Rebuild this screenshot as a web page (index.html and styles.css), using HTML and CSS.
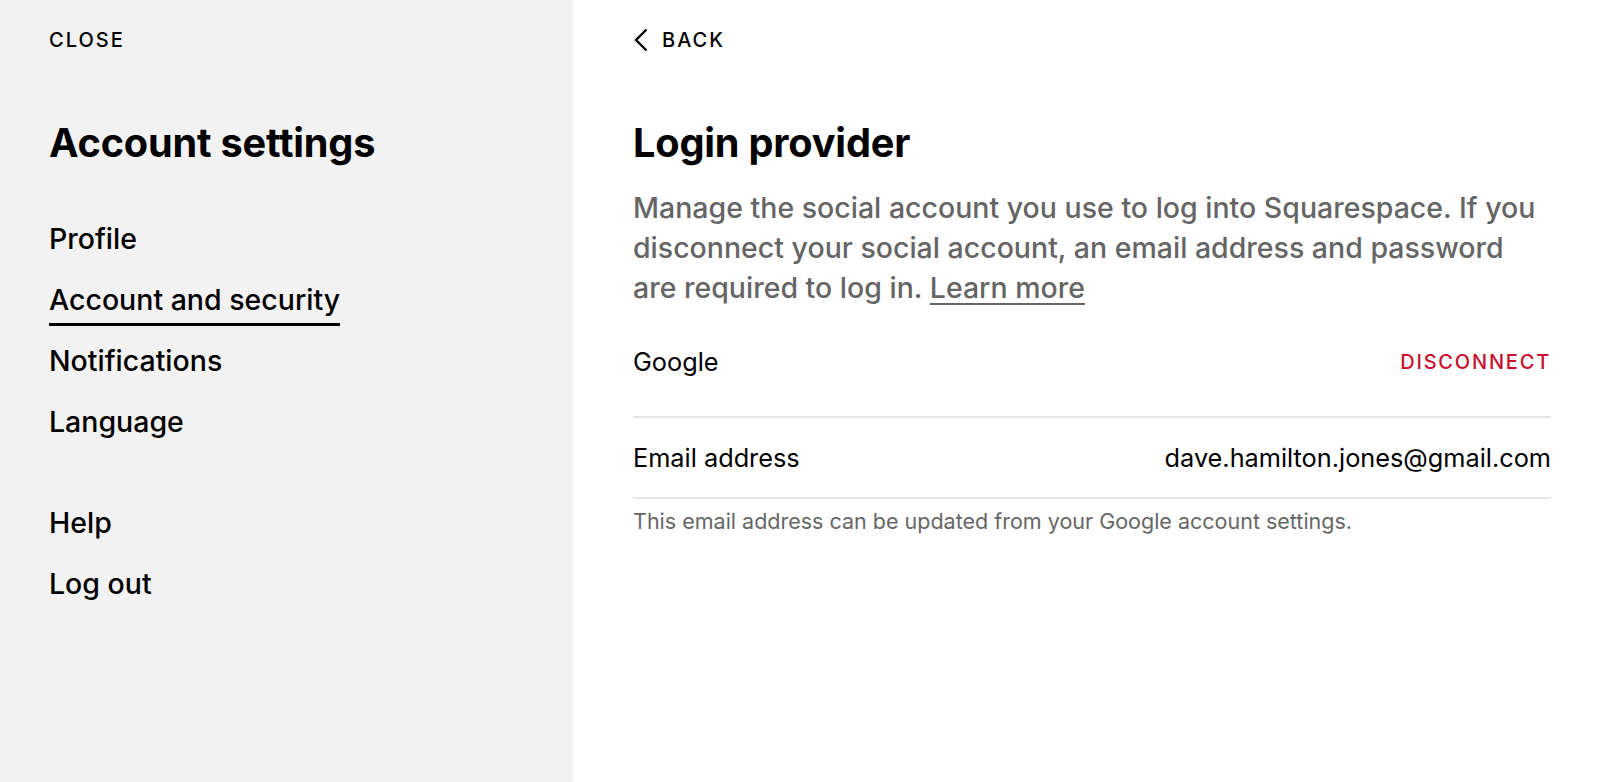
FILE: index.html
```html
<!DOCTYPE html>
<html lang="en">
<head>
<meta charset="utf-8">
<title>Account settings – Login provider</title>
<link rel="stylesheet" href="styles.css">
</head>
<body>
<div class="app">
  <aside class="sidebar">
    <a class="caps-link close" href="#">CLOSE</a>
    <h1 class="title">Account settings</h1>
    <nav class="nav">
      <a class="nav-item" href="#">Profile</a>
      <a class="nav-item active" href="#">Account and security</a>
      <a class="nav-item" href="#">Notifications</a>
      <a class="nav-item" href="#">Language</a>
      <a class="nav-item spaced" href="#">Help</a>
      <a class="nav-item" href="#">Log out</a>
    </nav>
  </aside>
  <main class="main">
    <a class="caps-link back" href="#">
      <svg class="chev" width="16" height="24" viewBox="0 0 16 24" aria-hidden="true"><path d="M13.5 1.5 L3 12 L13.5 22.5" fill="none" stroke="#000" stroke-width="2.4" stroke-linejoin="miter"/></svg>
      <span>BACK</span>
    </a>
    <h1 class="title">Login provider</h1>
    <p class="desc">Manage the social account you use to log into Squarespace. If you disconnect your social account, an email address and password are required to log in. <a class="learn" href="#">Learn more</a></p>
    <div class="row provider">
      <span class="row-label">Google</span>
      <a class="disconnect" href="#">DISCONNECT</a>
    </div>
    <div class="row email">
      <span class="row-label">Email address</span>
      <span class="row-value">dave.hamilton.jones@gmail.com</span>
    </div>
    <p class="note">This email address can be updated from your Google account settings.</p>
  </main>
</div>
</body>
</html>
```

FILE: styles.css
```css
* { box-sizing: border-box; }
html, body { margin: 0; padding: 0; }
body {
  font-family: "Inter", "Liberation Sans", Arial, sans-serif;
  color: #000;
  background: #fff;
}
a { color: inherit; text-decoration: none; }

.app {
  display: flex;
  height: 782px;
}

.sidebar {
  width: 573px;
  flex: none;
  background: #f2f2f2;
  padding: 28px 48px 0 49px;
  display: flex;
  flex-direction: column;
  align-items: flex-start;
}

.caps-link {
  font-size: 20px;
  font-weight: 500;
  letter-spacing: 2px;
  line-height: 24px;
  height: 24px;
}

.title {
  margin: 67px 0 0;
  font-size: 39.7px;
  font-weight: 700;
  line-height: 48px;
  letter-spacing: -0.2px;
}

.nav {
  margin-top: 55px;
  display: flex;
  flex-direction: column;
  align-items: flex-start;
  gap: 18px;
}
.nav-item {
  font-size: 28.5px;
  font-weight: 500;
  line-height: 34px;
  padding-bottom: 6px;
  border-bottom: 3px solid transparent;
}
.nav-item.active { border-bottom-color: #000; }
.nav-item.spaced { margin-top: 40px; }

.main {
  flex: 1;
  padding: 28px 49px 0 60px;
  display: flex;
  flex-direction: column;
}

.back {
  display: flex;
  align-items: center;
  gap: 13px;
  align-self: flex-start;
}
.chev { display: block; }

.desc {
  margin: 21px 0 0;
  font-size: 28.5px;
  font-weight: 500;
  line-height: 40px;
  color: #656565;
}
.learn {
  text-decoration: underline;
  text-decoration-thickness: 2px;
  text-underline-offset: 5px;
}

.row {
  display: flex;
  justify-content: space-between;
  align-items: center;
  border-bottom: 2px solid #e6e6e6;
  font-size: 25.3px;
  line-height: 30px;
}
.provider { height: 110px; }
.email { height: 81px; }

.disconnect {
  color: #c8102e;
  font-size: 20px;
  font-weight: 500;
  letter-spacing: 1.8px;
}

.note {
  margin: 10px 0 0;
  font-size: 21.5px;
  line-height: 24px;
  color: #666;
}
```
